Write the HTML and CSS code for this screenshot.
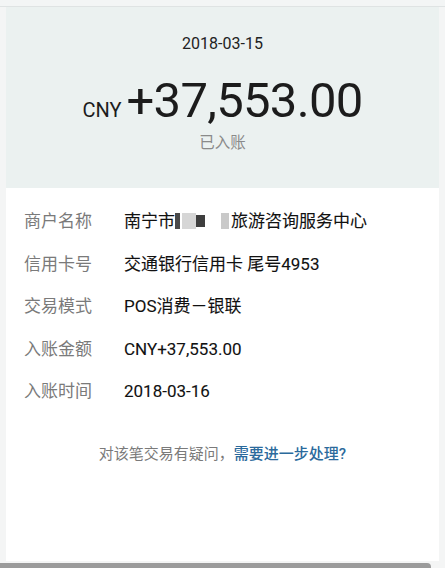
FILE: index.html
```html
<!DOCTYPE html>
<html lang="zh-CN">
<head>
<meta charset="utf-8">
<title>交易详情</title>
<link rel="stylesheet" href="styles.css">
</head>
<body>
<div class="page">
  <div class="topline"></div>
  <div class="card">
    <section class="summary">
      <div class="date">2018-03-15</div>
      <div class="amount"><span class="cur">CNY</span><span class="num">+37,553.00</span></div>
      <div class="status">已入账</div>
    </section>
    <section class="details">
      <div class="row"><span class="label">商户名称</span><span class="value">南宁市<span class="mask"><i class="m1"></i><i class="m2"></i><i class="m3"></i><i class="m4"></i><i class="m5"></i></span>旅游咨询服务中心</span></div>
      <div class="row"><span class="label">信用卡号</span><span class="value">交通银行信用卡 尾号4953</span></div>
      <div class="row"><span class="label">交易模式</span><span class="value">POS消费－银联</span></div>
      <div class="row"><span class="label">入账金额</span><span class="value">CNY+37,553.00</span></div>
      <div class="row"><span class="label">入账时间</span><span class="value">2018-03-16</span></div>
      <p class="help">对该笔交易有疑问，<span class="link">需要进一步处理?</span></p>
    </section>
  </div>
  <div class="scrollbar"></div>
</div>
</body>
</html>
```
FILE: styles.css
```css
* { box-sizing: border-box; }
html, body { margin: 0; padding: 0; }
body {
  background: #f4f5f5;
  font-family: Roboto, "Noto Sans CJK SC", sans-serif;
  width: 445px;
  height: 568px;
  overflow: hidden;
}
.page {
  display: flex;
  flex-direction: column;
  height: 568px;
}
.topline {
  height: 7px;
  border-bottom: 1px solid #dfe3e3;
  background: #f3f5f5;
  flex: none;
}
.card {
  margin: 0 6px;
  display: flex;
  flex-direction: column;
  flex: 1;
}
.summary {
  background: #ebf1f0;
  height: 181px;
  display: flex;
  flex-direction: column;
  align-items: center;
  padding-top: 27px;
}
.date {
  font-size: 16px;
  color: #222;
  line-height: 20px;
}
.amount {
  display: flex;
  align-items: baseline;
  margin-top: 19px;
  color: #1c1c1c;
  line-height: 56px;
}
.cur {
  font-size: 20px;
  margin-right: 5px;
}
.num {
  font-size: 49px;
  letter-spacing: -0.7px;
}
.status {
  font-size: 15.5px;
  color: #8a8a8a;
  margin-top: -6px;
  line-height: 22px;
}
.details {
  background: #fff;
  flex: 1;
  padding-top: 20px;
}
.row {
  display: flex;
  height: 42.5px;
  align-items: flex-start;
  font-size: 17px;
  line-height: 26px;
}
.label {
  width: 118px;
  padding-left: 18px;
  color: #7a7a7a;
  flex: none;
}
.value {
  color: #111;
  font-weight: 400;
  display: flex;
  align-items: center;
  -webkit-text-stroke: 0.1px #111;
}
.mask {
  display: inline-flex;
  width: 56px;
  height: 18px;
  align-items: center;
}
.mask i { display: block; height: 16px; flex: none; }
.m1 { width: 5px; background: #4a4a4a; }
.m2 { width: 2px; background: #fff; }
.m3 { width: 14px; background: #d6d6d6; }
.m4 { width: 9px; background: #3e3e3e; height: 12px !important; }
.m5 { width: 10px; background: #fff; }
.mask::after {
  content: "";
  display: block;
  width: 8px;
  height: 16px;
  background: #c9c9c9;
  margin-left: 6px;
}
.help {
  margin: 22px 0 0;
  text-align: center;
  font-size: 15px;
  color: #7a7a7a;
  line-height: 22px;
}
.link {
  color: #2b6a9c;
  font-weight: 500;
}
.scrollbar {
  flex: none;
  height: 5px;
  width: 431px;
  margin-top: 2px;
  background: #9b9b9b;
  border-radius: 0 4px 0 0;
}
```
